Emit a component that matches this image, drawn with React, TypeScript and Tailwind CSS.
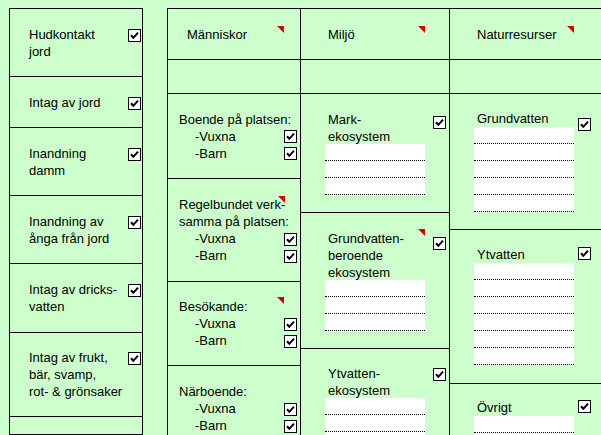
// Exponeringsvägar — checklist sheet
import React from 'react'

function Check({ className = '' }: { className?: string }) {
  return (
    <svg width="13" height="13" viewBox="0 0 13 13" className={`block shrink-0 ${className}`}>
      <rect x="0.5" y="0.5" width="12" height="12" fill="#fff" stroke="#000" />
      <path d="M3 6.3 L5.3 8.8 L10 3.6" fill="none" stroke="#000" strokeWidth="2" />
    </svg>
  )
}

// red comment marker, Excel style
function Note({ className }: { className: string }) {
  return (
    <svg width="7" height="7" viewBox="0 0 7 7" className={`absolute ${className}`}>
      <polygon points="0,0 7,0 7,7" fill="#e00000" />
    </svg>
  )
}

function Lines({ n, className = '' }: { n: number; className?: string }) {
  return (
    <div className={`bg-white ${className}`}>
      {Array.from({ length: n }).map((_, i) => (
        <div key={i} className="h-[17px] border-b border-dotted border-black" />
      ))}
    </div>
  )
}

function Sub({ label }: { label: string }) {
  return (
    <div className="flex items-center justify-between pl-[16px]">
      <span>{label}</span>
      <Check className="mt-[1px]" />
    </div>
  )
}

const LEFT = [
  { h: 'h-[68px]', lines: ['Hudkontakt', 'jord'] },
  { h: 'h-[51px]', lines: ['Intag av jord'] },
  { h: 'h-[68px]', lines: ['Inandning', 'damm'] },
  { h: 'h-[68px]', lines: ['Inandning av', 'ånga från jord'] },
  { h: 'h-[69px]', lines: ['Intag av dricks-', 'vatten'] },
  { h: 'h-[84px]', lines: ['Intag av frukt,', 'bär, svamp,', 'rot- & grönsaker'] },
]

export default function App() {
  return (
    <div className="flex h-[435px] w-[601px] overflow-hidden bg-[#ccffcc] pl-[9px] pt-[8px] font-['Liberation_Sans',Arial,sans-serif] text-[13px] leading-[17px] text-black">

      {/* Exposure routes */}
      <div className="flex w-[134px] shrink-0 flex-col border border-black">
        {LEFT.map((r) => (
          <div key={r.lines[0]} className={`${r.h} flex shrink-0 items-center border-b border-black pl-[19px] pr-[1px]`}>
            <div className="flex w-full items-start justify-between">
              <div>
                {r.lines.map((l) => (
                  <div key={l}>{l}</div>
                ))}
              </div>
              <Check className="mt-[3px]" />
            </div>
          </div>
        ))}
        <div className="flex-1" />
      </div>

      {/* Recipients */}
      <div className="ml-[24px] flex w-[460px] shrink-0 flex-col border-l border-t border-black">
        <div className="flex h-[51px] shrink-0 border-b border-black">
          <div className="relative flex w-[133px] shrink-0 items-center border-r border-black pl-[19px]">
            Människor
            <Note className="left-[109px] top-[17px]" />
          </div>
          <div className="relative flex w-[149px] shrink-0 items-center border-r border-black pl-[27px]">
            Miljö
            <Note className="left-[117px] top-[17px]" />
          </div>
          <div className="relative flex flex-1 items-center pl-[27px]">
            Naturresurser
            <Note className="left-[117px] top-[17px]" />
          </div>
        </div>
        <div className="flex h-[34px] shrink-0 border-b border-black">
          <div className="w-[133px] shrink-0 border-r border-black" />
          <div className="w-[149px] shrink-0 border-r border-black" />
          <div className="flex-1" />
        </div>

        <div className="flex flex-1">
          {/* Människor */}
          <div className="flex w-[133px] shrink-0 flex-col border-r border-black">
            <div className="flex h-[85px] shrink-0 flex-col justify-center border-b border-black pl-[11px] pr-[3px]">
              <div>Boende på platsen:</div>
              <Sub label="-Vuxna" />
              <Sub label="-Barn" />
            </div>
            <div className="relative flex h-[103px] shrink-0 flex-col justify-center border-b border-black pl-[11px] pr-[3px]">
              <Note className="left-[110px] top-[17px]" />
              <div>Regelbundet verk-</div>
              <div>samma på platsen:</div>
              <Sub label="-Vuxna" />
              <Sub label="-Barn" />
            </div>
            <div className="relative flex h-[84px] shrink-0 flex-col justify-center border-b border-black pl-[11px] pr-[3px]">
              <Note className="left-[109px] top-[15px]" />
              <div>Besökande:</div>
              <Sub label="-Vuxna" />
              <Sub label="-Barn" />
            </div>
            <div className="flex h-[85px] shrink-0 flex-col justify-center pl-[11px] pr-[3px]">
              <div>Närboende:</div>
              <Sub label="-Vuxna" />
              <Sub label="-Barn" />
            </div>
          </div>

          {/* Miljö */}
          <div className="flex w-[149px] shrink-0 flex-col border-r border-black">
            <div className="flex h-[119px] shrink-0 border-b border-black pl-[24px]">
              <div className="w-[100px] pt-[17px]">
                <div className="pl-[3px]">Mark-<br />ekosystem</div>
                <Lines n={3} className="-mt-[1px]" />
              </div>
              <Check className="ml-[8px] mt-[22px]" />
            </div>
            <div className="relative flex h-[136px] shrink-0 border-b border-black pl-[24px]">
              <Note className="left-[117px] top-[16px]" />
              <div className="w-[100px] pt-[17px]">
                <div className="pl-[3px]">Grundvatten-<br />beroende<br />ekosystem</div>
                <Lines n={3} className="-mt-[1px]" />
              </div>
              <Check className="ml-[8px] mt-[24px]" />
            </div>
            <div className="flex flex-1 pl-[24px]">
              <div className="w-[100px] pt-[16px]">
                <div className="pl-[3px]">Ytvatten-<br />ekosystem</div>
                <Lines n={3} className="-mt-[1px]" />
              </div>
              <Check className="ml-[8px] mt-[19px]" />
            </div>
          </div>

          {/* Naturresurser */}
          <div className="flex flex-1 flex-col">
            <div className="flex h-[136px] shrink-0 border-b border-black pl-[24px]">
              <div className="w-[100px] pt-[16px]">
                <div className="pl-[3px]">Grundvatten</div>
                <Lines n={5} />
              </div>
              <Check className="ml-[4px] mt-[24px]" />
            </div>
            <div className="flex h-[154px] shrink-0 border-b border-black pl-[24px]">
              <div className="w-[100px] pt-[16px]">
                <div className="pl-[3px]">Ytvatten</div>
                <Lines n={6} />
              </div>
              <Check className="ml-[4px] mt-[17px]" />
            </div>
            <div className="flex flex-1 pl-[24px]">
              <div className="w-[100px] pt-[15px]">
                <div className="pl-[3px]">Övrigt</div>
                <Lines n={3} />
              </div>
              <Check className="ml-[4px] mt-[16px]" />
            </div>
          </div>
        </div>
      </div>
    </div>
  )
}
